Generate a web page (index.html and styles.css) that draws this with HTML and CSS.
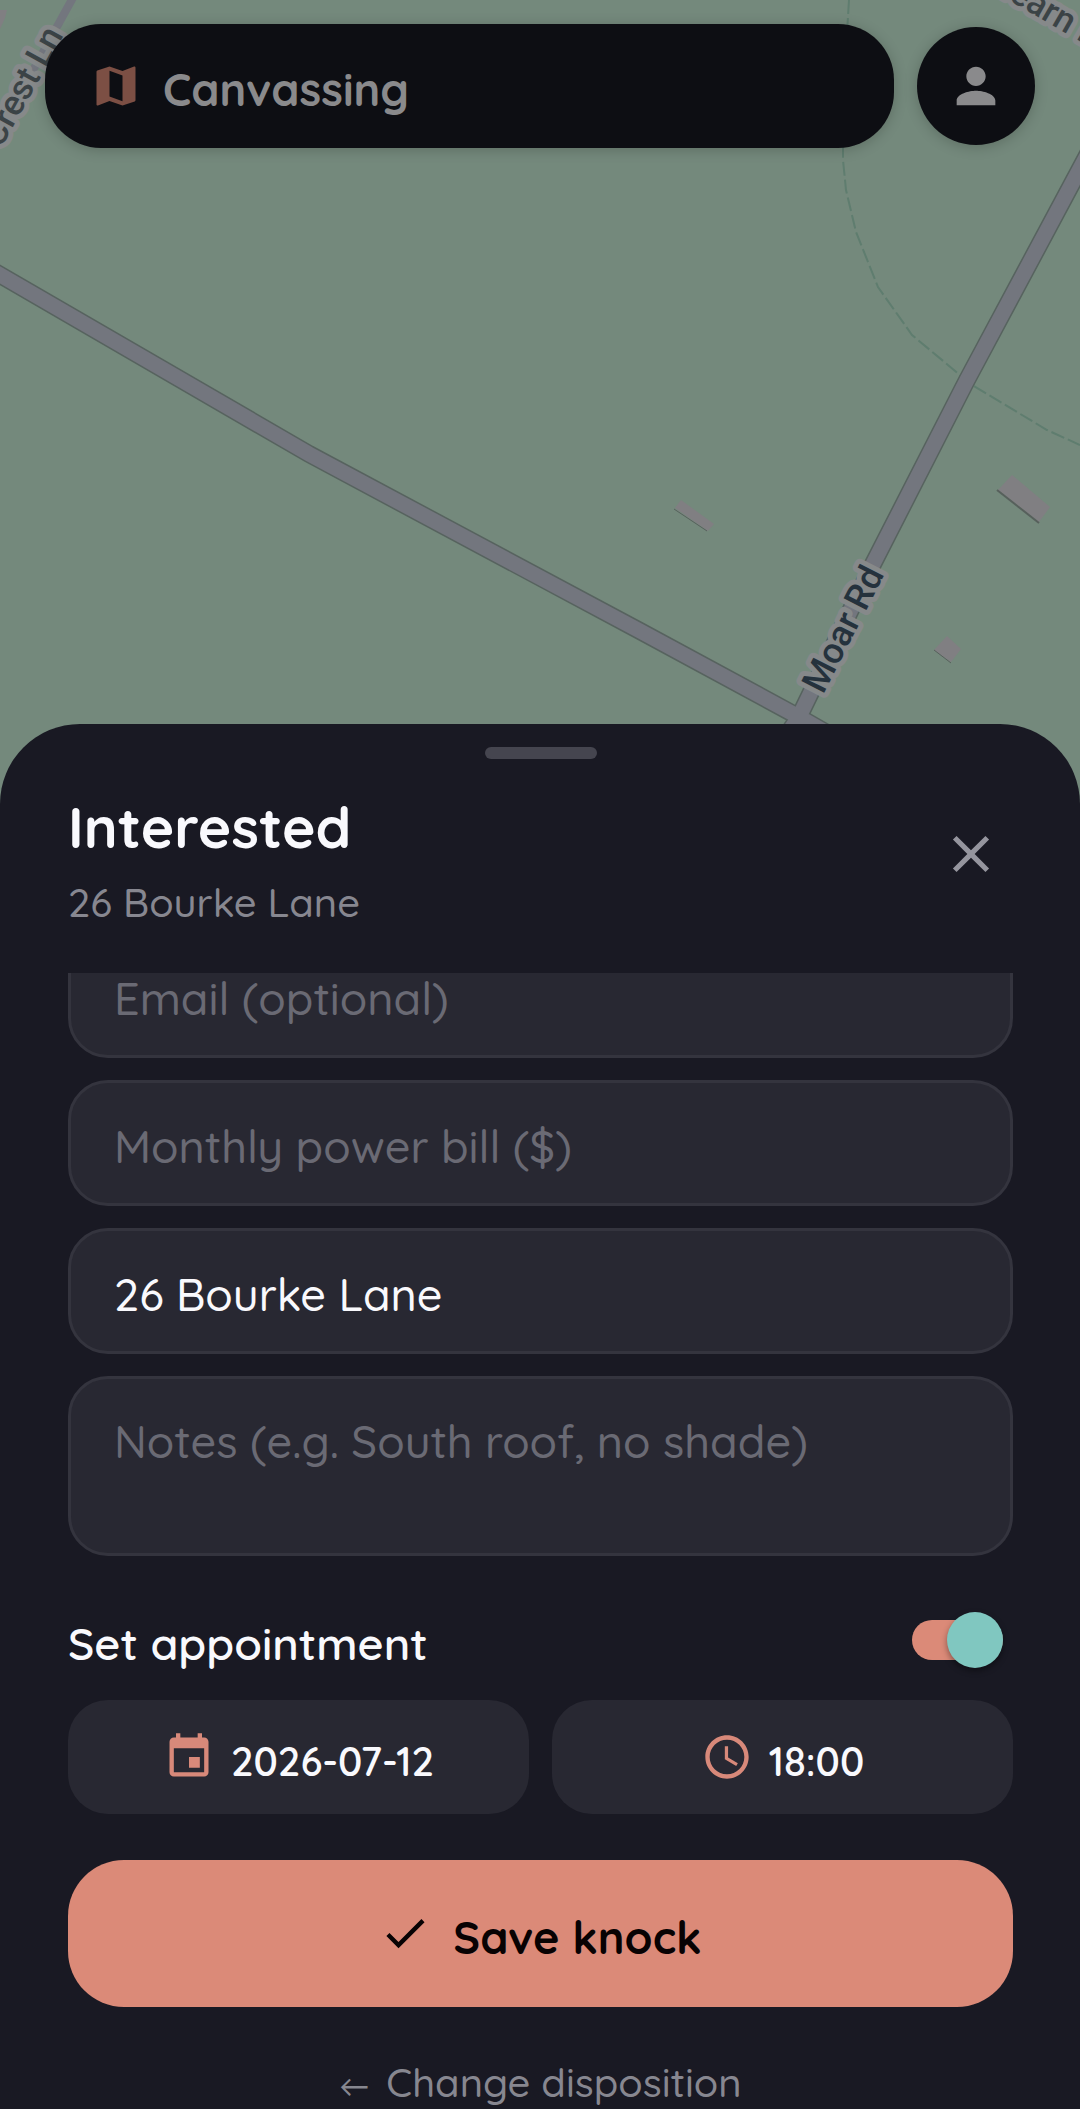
FILE: index.html
```html
<!DOCTYPE html>
<html lang="en">
<head>
    <meta charset="UTF-8">
    <meta name="viewport" content="width=device-width, initial-scale=1">
    <title>Canvassing</title>
    <link rel="stylesheet" href="styles.css">
</head>
<body>

    <svg class="map" viewBox="0 0 1080 810" preserveAspectRatio="xMidYMin slice" aria-hidden="true">
        <!-- parcel line -->
        <path class="trail" d="M849 0 L843 100 L843 160 L846 190 L856 232 L878 287 L912 335 L972 385 L1047 430 L1080 445"/>

        <!-- buildings -->
        <polygon class="building" points="675,508 681,500 714,524 708,531"/>
        <polygon class="building" points="998,490 1012,475 1050,507 1039,522"/>
        <polygon class="building" points="934,650 947,636 961,649 951,662"/>
        <polygon class="building" points="0,10 7,10 5,18 0,29"/>
        <path class="wall" d="M674 509 L707 531 M934 650 L951 663"/>
        <path class="wall thick" d="M997 490 L1039 523"/>

        <!-- roads -->
        <path class="road-edge" d="M-10 269 L309 454 L640 631 L799 717 L860 752 M799 717 L872 566 L967 380 L1090 150 M799 717 L780 745"/>
        <path class="road" d="M-10 269 L309 454 L640 631 L799 717 L860 752 M799 717 L872 566 L967 380 L1090 150 M799 717 L780 745"/>
        <path class="lane" d="M75 -6 L0 130"/>

        <text class="road-name" transform="translate(823 695) rotate(-63)">Moar Rd</text>
        <text class="road-name side" text-anchor="end" transform="translate(64 35) rotate(-61)">Crest Ln</text>
        <text class="road-name side" transform="translate(986 -13) rotate(30)">Hearn Rd</text>
    </svg>

    <header class="topbar">
        <div class="title-pill">
            <svg class="icon icon-map" viewBox="0 0 24 24" aria-hidden="true"><path d="M20.5 3l-.16.03L15 5.1 9 3 3.36 4.9c-.21.07-.36.25-.36.48V20.5c0 .28.22.5.5.5l.16-.03L9 18.9l6 2.1 5.64-1.9c.21-.07.36-.25.36-.48V3.5c0-.28-.22-.5-.5-.5zM15 19l-6-2.11V5l6 2.11V19z"/></svg>
            <h1>Canvassing</h1>
        </div>
        <button class="profile" type="button" aria-label="Profile">
            <svg class="icon icon-person" viewBox="0 0 24 24" aria-hidden="true"><path d="M12 12c2.21 0 4-1.79 4-4s-1.79-4-4-4-4 1.79-4 4 1.79 4 4 4zm0 2c-2.67 0-8 1.34-8 4v2h16v-2c0-2.66-5.33-4-8-4z"/></svg>
        </button>
    </header>

    <main class="sheet">
        <div class="handle"></div>
        <div class="sheet-head">
            <div>
                <h2>Interested</h2>
                <p>26 Bourke Lane</p>
            </div>
            <button class="close" type="button" aria-label="Close">
                <svg class="icon icon-close" viewBox="0 0 24 24" aria-hidden="true"><path d="M19 6.41L17.59 5 12 10.59 6.41 5 5 6.41 10.59 12 5 17.59 6.41 19 12 13.41 17.59 19 19 17.59 13.41 12z"/></svg>
            </button>
        </div>

        <form>
            <div class="fields">
                <input class="field" type="email" name="email" placeholder="Email (optional)" aria-label="Email">
                <input class="field" type="text" name="bill" placeholder="Monthly power bill ($)" aria-label="Monthly power bill">
                <input class="field" type="text" name="address" value="26 Bourke Lane" aria-label="Address">
                <textarea class="field notes" name="notes" placeholder="Notes (e.g. South roof, no shade)" aria-label="Notes"></textarea>
            </div>

            <div class="appointment">
                <label for="appointment">Set appointment</label>
                <input class="switch" type="checkbox" id="appointment" name="appointment" checked>
            </div>

            <div class="pickers">
                <button class="picker" type="button">
                    <svg class="icon" viewBox="0 0 24 24" aria-hidden="true"><path d="M17 12h-5v5h5v-5zM16 1v2H8V1H6v2H5c-1.11 0-1.99.9-1.99 2L3 19c0 1.1.89 2 2 2h14c1.1 0 2-.9 2-2V5c0-1.1-.9-2-2-2h-1V1h-2zm3 18H5V8h14v11z"/></svg>
                    <span>2026-07-12</span>
                </button>
                <button class="picker" type="button">
                    <svg class="icon" viewBox="0 0 24 24" aria-hidden="true"><path d="M11.99 2C6.47 2 2 6.48 2 12s4.47 10 9.99 10C17.52 22 22 17.52 22 12S17.52 2 11.99 2zM12 20c-4.42 0-8-3.58-8-8s3.58-8 8-8 8 3.58 8 8-3.58 8-8 8zM12.5 7H11v6l5.25 3.15.75-1.23-4.5-2.67z"/></svg>
                    <span>18:00</span>
                </button>
            </div>

            <button class="save" type="submit">
                <svg class="icon" viewBox="0 0 24 24" aria-hidden="true"><path d="M9 16.17L4.83 12l-1.42 1.41L9 19 21 7l-1.41-1.41z"/></svg>
                <span>Save knock</span>
            </button>
            <button class="back" type="button"><span class="arrow">←</span> Change disposition</button>
        </form>
    </main>

</body>
</html>
```
FILE: styles.css
```css
* {
    box-sizing: border-box;
}
body {
    margin: 0;
    min-height: 100vh;
    background-color: #191923;
    color: #f9f9fd;
    font-family: Quicksand, Lato, sans-serif;
    font-weight: 500;
    overflow: hidden;
}
h1, h2, p {
    margin: 0;
}
button, input, textarea {
    font-family: inherit;
    font-weight: inherit;
    margin: 0;
}
button {
    border: none;
    padding: 0;
    cursor: pointer;
}
.icon {
    width: 52px;
    height: 52px;
    fill: currentColor;
    flex: none;
}

/* map */
.map {
    position: absolute;
    top: 0;
    left: 0;
    width: 100%;
    height: 810px;
    background-color: #74897c;
    z-index: -1;
}
.road-edge, .road, .lane, .trail, .wall {
    fill: none;
}
.road-edge {
    stroke: #57635f;
    stroke-width: 18px;
}
.road {
    stroke: #73767e;
    stroke-width: 15px;
}
.lane {
    stroke: #73767e;
    stroke-width: 8px;
}
.trail {
    stroke: #5f7d6f;
    stroke-width: 2px;
    stroke-dasharray: 14 4;
}
.building {
    fill: #807f82;
}
.wall {
    stroke: #57605c;
    stroke-width: 1px;
}
.wall.thick {
    stroke-width: 2px;
}
.road-name {
    font-family: Roboto, sans-serif;
    font-size: 36px;
    font-weight: 500;
    fill: #25323d;
    stroke: #86898a;
    stroke-width: 10px;
    stroke-linejoin: round;
    paint-order: stroke;
}
.road-name.side {
    font-size: 35px;
    fill: #3b4346;
}

/* top bar */
.topbar {
    display: flex;
    align-items: center;
    gap: 23px;
    height: 172px;
    padding: 0 45px;
}
.title-pill {
    flex: 1;
    display: flex;
    align-items: center;
    gap: 21px;
    height: 124px;
    padding: 0 45px;
    border-radius: 56px;
    background-color: #0d0e13;
    box-shadow: 0 2px 14px rgba(0, 0, 0, 0.2);
}
.title-pill h1 {
    font-size: 45px;
    line-height: 56px;
    color: #8a8a8c;
    padding-top: 6px;
}
.icon-map {
    color: #7c4f44;
}
.profile {
    display: flex;
    align-items: center;
    justify-content: center;
    width: 118px;
    height: 118px;
    border-radius: 50%;
    background-color: #0d0e13;
    color: #8a8a8c;
    box-shadow: 0 2px 14px rgba(0, 0, 0, 0.2);
}
.icon-person {
    width: 58px;
    height: 58px;
}

/* bottom sheet */
.sheet {
    margin-top: 552px;
    padding: 23px 67px 0 68px;
    border-radius: 80px 80px 0 0;
    background-color: #191923;
}
.handle {
    width: 112px;
    height: 12px;
    margin: 0 auto;
    border-radius: 6px;
    background-color: #45454f;
}
.sheet-head {
    display: flex;
    justify-content: space-between;
    align-items: center;
    height: 214px;
    padding: 0 11px 24px 0;
}
.sheet-head h2 {
    font-size: 57px;
    line-height: 70px;
    padding-top: 10px;
}
.sheet-head p {
    font-size: 40px;
    line-height: 50px;
    padding-top: 15px;
    color: #878790;
}
.close {
    display: flex;
    background: none;
    color: #95959e;
}
.icon-close {
    width: 62px;
    height: 62px;
}

/* form */
.fields {
    display: flex;
    flex-direction: column;
    justify-content: flex-end;
    gap: 22px;
    height: 583px;
    overflow: hidden;
}
.field {
    flex: none;
    width: 100%;
    height: 126px;
    padding: 6px 43px 0;
    border: 3px solid #34343e;
    border-radius: 40px;
    background-color: #282832;
    color: #f9f9fd;
    font-size: 45px;
    outline: none;
}
.field::placeholder {
    color: #6a6a74;
    opacity: 1;
}
.notes {
    height: 180px;
    padding-top: 34px;
    line-height: 56px;
    resize: none;
}
.appointment {
    display: flex;
    justify-content: space-between;
    align-items: center;
    height: 144px;
    padding: 24px 10px 0 0;
}
.appointment label {
    font-size: 45px;
    font-weight: 600;
    line-height: 56px;
    padding-top: 6px;
}
.switch {
    appearance: none;
    position: relative;
    width: 91px;
    height: 40px;
    border-radius: 20px;
    background-color: #db8a78;
    cursor: pointer;
}
.switch::after {
    content: "";
    position: absolute;
    top: -8px;
    right: 0;
    width: 56px;
    height: 56px;
    border-radius: 50%;
    background-color: #80c7c0;
    box-shadow: 0 3px 6px rgba(0, 0, 0, 0.4);
}
.switch:not(:checked)::after {
    right: auto;
    left: 0;
}
.pickers {
    display: grid;
    grid-template-columns: 1fr 1fr;
    gap: 23px;
}
.picker {
    display: flex;
    align-items: center;
    justify-content: center;
    gap: 16px;
    height: 114px;
    border-radius: 40px;
    background-color: #282832;
    color: #d8897a;
}
.picker span {
    font-size: 40px;
    font-weight: 600;
    line-height: 50px;
    padding-top: 8px;
    color: #f9f9fd;
}
.save {
    display: flex;
    align-items: center;
    justify-content: center;
    gap: 22px;
    width: 100%;
    height: 147px;
    margin-top: 46px;
    padding-bottom: 2px;
    border-radius: 56px;
    background-color: #db8a78;
    color: #080203;
    font-size: 45px;
    font-weight: 700;
}
.save span {
    padding-top: 8px;
}
.back {
    display: block;
    margin: 50px auto 0;
    background: none;
    color: #878790;
    font-size: 40px;
    line-height: 50px;
}
.arrow {
    font-size: 30px;
    font-weight: 400;
    margin-right: 6px;
}
```
